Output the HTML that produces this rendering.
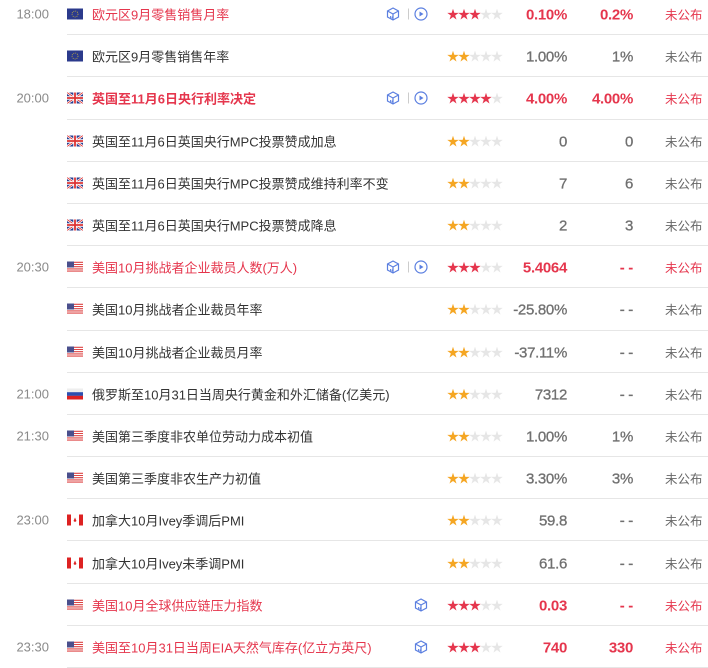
<!DOCTYPE html>
<html><head><meta charset="utf-8"><style>
body{margin:0;width:708px;height:666px;overflow:hidden;background:#fff;font-family:"Liberation Sans","Noto Sans CJK SC",sans-serif;}
#c{position:absolute;top:-7px;left:0;width:708px}
.r{position:relative;height:42.2px;}
.r:after{content:"";position:absolute;left:67px;right:0;bottom:0;height:1px;background:#e6e6e6}
.r>*{position:absolute;top:50%;transform:translateY(-50%)}
.t{right:659px;color:#8a8a8a;font-size:13px}
.f{left:67px;width:16px;height:11px}
.n{left:92px;font-size:13px;color:#333;white-space:nowrap}
.red .n,.red .a,.red .p{color:#e5364d}
.s{left:447px;font-size:12px;letter-spacing:-1px;color:#e6e6e6;white-space:nowrap}
.s b{font-weight:normal}
.red .s b{color:#e5364d}.y b{color:#f5a623}
.a,.p{font-size:15px;color:#707070;letter-spacing:-0.3px;line-height:15px;margin-top:1px;-webkit-text-stroke:0.3px}
.a{right:141px}.p{right:75px}
.red .a,.red .p{font-weight:bold;-webkit-text-stroke:0}
.u{left:665px;font-size:12.5px;color:#666}
.red .u{color:#e5364d}
.cube{width:14px;height:14px}
.c1{left:386px}.c2{left:414px}
.dv{left:408px;width:1px;height:11px;background:#ccc}
</style></head><body><div id="c">
<svg width="0" height="0" style="position:absolute"><defs>
<g id="eu"><rect width="16" height="11" fill="#2b3a8c"/><circle cx="8" cy="5.5" r="3" fill="none" stroke="#c9b23a" stroke-width="0.8" stroke-dasharray="1 1"/></g>
<g id="uk"><rect width="16" height="11" fill="#2a3d8f"/><path d="M0 0L16 11M16 0L0 11" stroke="#fff" stroke-width="2.4"/><path d="M0 0L16 11M16 0L0 11" stroke="#d33" stroke-width="0.9"/><path d="M8 0V11M0 5.5H16" stroke="#fff" stroke-width="3.4"/><path d="M8 0V11M0 5.5H16" stroke="#d33" stroke-width="1.8"/></g>
<g id="us"><rect width="16" height="11" fill="#fff"/><path d="M0 0.8H16M0 3H16M0 5.2H16M0 7.4H16M0 9.6H16" stroke="#d44" stroke-width="1.1"/><rect width="7" height="6" fill="#4a4f8c"/></g>
<g id="ru"><rect width="16" height="4" fill="#eee"/><rect y="3.7" width="16" height="3.7" fill="#2c4fb0"/><rect y="7.3" width="16" height="3.7" fill="#d22"/></g>
<g id="ca"><rect width="16" height="11" fill="#fff"/><rect width="4" height="11" fill="#d22"/><rect x="12" width="4" height="11" fill="#d22"/><path d="M8 3L9.5 6.5L8 7.5L6.5 6.5Z" fill="#d22"/></g>
<g id="cb"><path d="M7 1L12.5 4V10L7 13L1.5 10V4Z M1.5 4L7 7L12.5 4M7 7V13" fill="none" stroke="#5b7fe0" stroke-width="1.2"/><path d="M4.5 9V11M6 9.5V11.5" stroke="#5b7fe0" stroke-width="0.9"/></g>
<g id="pl"><circle cx="7" cy="7" r="6" fill="none" stroke="#5b7fe0" stroke-width="1.2"/><path d="M5.5 4.5L9.5 7L5.5 9.5Z" fill="#5b7fe0"/></g>
</defs></svg>

<div class="r red"><span class="t">18:00</span><svg class="f"><use href="#eu"/></svg><span class="n">欧元区9月零售销售月率</span><svg class="cube c1"><use href="#cb"/></svg><span class="dv"></span><svg class="cube c2"><use href="#pl"/></svg><span class="s"><b>★★★</b>★★</span><span class="a">0.10%</span><span class="p">0.2%</span><span class="u">未公布</span></div>
<div class="r y"><svg class="f"><use href="#eu"/></svg><span class="n">欧元区9月零售销售年率</span><span class="s"><b>★★</b>★★★</span><span class="a">1.00%</span><span class="p">1%</span><span class="u">未公布</span></div>
<div class="r red"><span class="t">20:00</span><svg class="f"><use href="#uk"/></svg><span class="n" style="font-weight:bold">英国至11月6日央行利率决定</span><svg class="cube c1"><use href="#cb"/></svg><span class="dv"></span><svg class="cube c2"><use href="#pl"/></svg><span class="s"><b>★★★★</b>★</span><span class="a">4.00%</span><span class="p">4.00%</span><span class="u">未公布</span></div>
<div class="r y"><svg class="f"><use href="#uk"/></svg><span class="n">英国至11月6日英国央行MPC投票赞成加息</span><span class="s"><b>★★</b>★★★</span><span class="a">0</span><span class="p">0</span><span class="u">未公布</span></div>
<div class="r y"><svg class="f"><use href="#uk"/></svg><span class="n">英国至11月6日英国央行MPC投票赞成维持利率不变</span><span class="s"><b>★★</b>★★★</span><span class="a">7</span><span class="p">6</span><span class="u">未公布</span></div>
<div class="r y"><svg class="f"><use href="#uk"/></svg><span class="n">英国至11月6日英国央行MPC投票赞成降息</span><span class="s"><b>★★</b>★★★</span><span class="a">2</span><span class="p">3</span><span class="u">未公布</span></div>
<div class="r red"><span class="t">20:30</span><svg class="f"><use href="#us"/></svg><span class="n">美国10月挑战者企业裁员人数(万人)</span><svg class="cube c1"><use href="#cb"/></svg><span class="dv"></span><svg class="cube c2"><use href="#pl"/></svg><span class="s"><b>★★★</b>★★</span><span class="a">5.4064</span><span class="p">- -</span><span class="u">未公布</span></div>
<div class="r y"><svg class="f"><use href="#us"/></svg><span class="n">美国10月挑战者企业裁员年率</span><span class="s"><b>★★</b>★★★</span><span class="a">-25.80%</span><span class="p">- -</span><span class="u">未公布</span></div>
<div class="r y"><svg class="f"><use href="#us"/></svg><span class="n">美国10月挑战者企业裁员月率</span><span class="s"><b>★★</b>★★★</span><span class="a">-37.11%</span><span class="p">- -</span><span class="u">未公布</span></div>
<div class="r y"><span class="t">21:00</span><svg class="f"><use href="#ru"/></svg><span class="n">俄罗斯至10月31日当周央行黄金和外汇储备(亿美元)</span><span class="s"><b>★★</b>★★★</span><span class="a">7312</span><span class="p">- -</span><span class="u">未公布</span></div>
<div class="r y"><span class="t">21:30</span><svg class="f"><use href="#us"/></svg><span class="n">美国第三季度非农单位劳动力成本初值</span><span class="s"><b>★★</b>★★★</span><span class="a">1.00%</span><span class="p">1%</span><span class="u">未公布</span></div>
<div class="r y"><svg class="f"><use href="#us"/></svg><span class="n">美国第三季度非农生产力初值</span><span class="s"><b>★★</b>★★★</span><span class="a">3.30%</span><span class="p">3%</span><span class="u">未公布</span></div>
<div class="r y"><span class="t">23:00</span><svg class="f"><use href="#ca"/></svg><span class="n">加拿大10月Ivey季调后PMI</span><span class="s"><b>★★</b>★★★</span><span class="a">59.8</span><span class="p">- -</span><span class="u">未公布</span></div>
<div class="r y"><svg class="f"><use href="#ca"/></svg><span class="n">加拿大10月Ivey未季调PMI</span><span class="s"><b>★★</b>★★★</span><span class="a">61.6</span><span class="p">- -</span><span class="u">未公布</span></div>
<div class="r red"><svg class="f"><use href="#us"/></svg><span class="n">美国10月全球供应链压力指数</span><svg class="cube c2"><use href="#cb"/></svg><span class="s"><b>★★★</b>★★</span><span class="a">0.03</span><span class="p">- -</span><span class="u">未公布</span></div>
<div class="r red"><span class="t">23:30</span><svg class="f"><use href="#us"/></svg><span class="n">美国至10月31日当周EIA天然气库存(亿立方英尺)</span><svg class="cube c2"><use href="#cb"/></svg><span class="s"><b>★★★</b>★★</span><span class="a">740</span><span class="p">330</span><span class="u">未公布</span></div>
</div></body></html>
